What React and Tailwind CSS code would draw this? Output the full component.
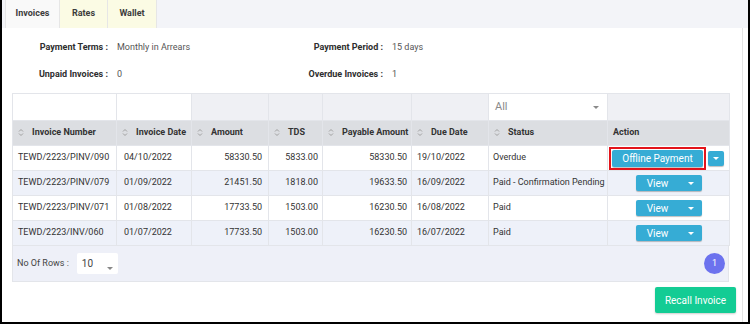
import { useState } from 'react'

const ROWS = [
  { no: 'TEWD/2223/PINV/090', date: '04/10/2022', amount: '58330.50', tds: '5833.00', payable: '58330.50', due: '19/10/2022', status: 'Overdue', action: 'offline' },
  { no: 'TEWD/2223/PINV/079', date: '01/09/2022', amount: '21451.50', tds: '1818.00', payable: '19633.50', due: '16/09/2022', status: 'Paid - Confirmation Pending', action: 'view' },
  { no: 'TEWD/2223/PINV/071', date: '01/08/2022', amount: '17733.50', tds: '1503.00', payable: '16230.50', due: '16/08/2022', status: 'Paid', action: 'view' },
  { no: 'TEWD/2223/INV/060', date: '01/07/2022', amount: '17733.50', tds: '1503.00', payable: '16230.50', due: '16/07/2022', status: 'Paid', action: 'view' },
]

const HEADERS = ['Invoice Number', 'Invoice Date', 'Amount', 'TDS', 'Payable Amount', 'Due Date', 'Status']

function SortIcon() {
  return (
    <svg width="6" height="9" viewBox="0 0 6 9" className="inline-block mr-[8px] -mt-[1px]" fill="none" stroke="#a0a0a0" strokeWidth="1">
      <path d="M1 3.5 L3 1.5 L5 3.5" />
      <path d="M1 5.5 L3 7.5 L5 5.5" />
    </svg>
  )
}

function Caret({ color = 'border-t-white' }) {
  return <span className={`inline-block w-0 h-0 border-x-[3px] border-t-[3px] border-x-transparent ${color}`} />
}

function ActionButton({ type }) {
  if (type === 'offline') {
    return (
      <div className="flex items-center gap-[2px] pl-[1px]">
        <div className="border-2 border-[#e3141b] p-px">
          <button className="w-[91px] h-[17px] bg-[#36acd5] text-white text-[10px] leading-[17px] rounded-[2px] shadow-[0_1px_1px_rgba(0,0,0,0.25)]">
            Offline Payment
          </button>
        </div>
        <button className="w-[16px] h-[15px] bg-[#36acd5] rounded-[2px] flex items-center justify-center shadow-[0_1px_1px_rgba(0,0,0,0.25)]">
          <Caret />
        </button>
      </div>
    )
  }
  return (
    <div className="flex justify-center">
      <button className="w-[66px] h-[16px] bg-[#36acd5] text-white text-[10px] rounded-[2px] flex items-center shadow-[0_1px_1px_rgba(0,0,0,0.25)]">
        <span className="w-[44px] text-center">View</span>
        <span className="w-[22px] flex justify-center"><Caret /></span>
      </button>
    </div>
  )
}

export default function App() {
  const [tab, setTab] = useState('Invoices')

  return (
    <div className="w-[750px] h-[324px] bg-white border-x-2 border-b-2 border-black font-[Roboto,sans-serif] text-[9px] text-[#333] overflow-hidden">
      <div className="h-[28px] bg-[#f3f4f8] flex pl-[3px]">
        {['Invoices', 'Rates', 'Wallet'].map(name => (
          <button
            key={name}
            onClick={() => setTab(name)}
            className={`h-[28px] font-bold text-[9px] text-[#3c3c3c] border-r border-[#e6e6e6] ${
              name === 'Invoices' ? 'w-[55px] bg-[#f9f9f9] border-l' : name === 'Rates' ? 'w-[48px] bg-[#fbfbe4]' : 'w-[49px] bg-[#fbfbe4]'
            }`}
          >
            {name}
          </button>
        ))}
      </div>

      <div className="mr-[5px] h-[294px] border-r border-[#e4e4e4] flex flex-col">
        <div className="mt-[12px] flex h-[14px] leading-[14px]">
          <div className="w-[106px] text-right font-bold text-[#2e2e2e]">Payment Terms :</div>
          <div className="w-[159px] pl-[9px] text-[#555]">Monthly in Arrears</div>
          <div className="w-[116px] text-right font-bold text-[#2e2e2e]">Payment Period :</div>
          <div className="pl-[9px] text-[#555]">15 days</div>
        </div>
        <div className="mt-[13px] flex h-[14px] leading-[14px]">
          <div className="w-[106px] text-right font-bold text-[#2e2e2e]">Unpaid Invoices :</div>
          <div className="w-[159px] pl-[9px] text-[#555]">0</div>
          <div className="w-[116px] text-right font-bold text-[#2e2e2e]">Overdue Invoices :</div>
          <div className="pl-[9px] text-[#555]">1</div>
        </div>

        <div className="ml-[10px] mt-[12px] w-[717px]">
          <table className="w-[717px] table-fixed border-collapse">
            <colgroup>
              <col className="w-[104px]" />
              <col className="w-[75px]" />
              <col className="w-[77px]" />
              <col className="w-[54px]" />
              <col className="w-[89px]" />
              <col className="w-[77px]" />
              <col className="w-[119px]" />
              <col className="w-[122px]" />
            </colgroup>
            <thead>
              <tr className="h-[27px]">
                <th className="border border-[#e3e5ea] bg-white" />
                <th className="border border-[#e3e5ea] bg-white" />
                <th className="border border-[#e3e5ea] bg-[#eff0f4]" />
                <th className="border border-[#e3e5ea] bg-[#eff0f4]" />
                <th className="border border-[#e3e5ea] bg-[#eff0f4]" />
                <th className="border border-[#e3e5ea] bg-[#eff0f4]" />
                <th className="border border-[#e3e5ea] bg-white p-0">
                  <div className="flex items-center justify-between h-[26px] pl-[6px] pr-[8px] font-normal text-[11px] text-[#8a8a8a]">
                    <span>All</span>
                    <Caret color="border-t-[#8a8a8a]" />
                  </div>
                </th>
                <th className="border border-[#e3e5ea] bg-[#eff0f4]" />
              </tr>
              <tr className="h-[25px] bg-[#dcdee2]">
                {HEADERS.map(h => (
                  <th key={h} className="border-x border-[#e3e5ea] text-left font-bold pl-[5px] whitespace-nowrap">
                    <SortIcon />
                    {h}
                  </th>
                ))}
                <th className="border-x border-[#e3e5ea] text-left font-bold pl-[5px]">Action</th>
              </tr>
            </thead>
            <tbody>
              {ROWS.map((r, i) => (
                <tr key={r.no} className={`h-[25px] ${i % 2 ? 'bg-[#eef1f9]' : 'bg-white'}`}>
                  <td className="border border-[#e3e5ea] pl-[5px] whitespace-nowrap">{r.no}</td>
                  <td className="border border-[#e3e5ea] pl-[7px]">{r.date}</td>
                  <td className="border border-[#e3e5ea] text-right pr-[6px]">{r.amount}</td>
                  <td className="border border-[#e3e5ea] text-right pr-[4px]">{r.tds}</td>
                  <td className="border border-[#e3e5ea] text-right pr-[4px]">{r.payable}</td>
                  <td className="border border-[#e3e5ea] pl-[5px]">{r.due}</td>
                  <td className="border border-[#e3e5ea] pl-[4px] whitespace-nowrap">{r.status}</td>
                  <td className="border border-[#e3e5ea] p-0">
                    <ActionButton type={r.action} />
                  </td>
                </tr>
              ))}
            </tbody>
          </table>

          <div className="h-[36px] bg-[#eef0f8] border-x border-b border-[#e3e5ea] flex items-center justify-between pl-[4px] pr-[3px]">
            <div className="flex items-center gap-[8px]">
              <span className="text-[#444]">No Of Rows :</span>
              <div className="w-[41px] h-[21px] bg-white rounded-[2px] flex items-center justify-between pl-[5px] pr-[5px] text-[10px] text-[#444]">
                <span>10</span>
                <span className="mt-[5px]"><Caret color="border-t-[#888]" /></span>
              </div>
            </div>
            <div className="w-[21px] h-[21px] rounded-full bg-[#6c72ee] text-white text-[9px] flex items-center justify-center">1</div>
          </div>
        </div>

        <div className="flex justify-end pr-[6px] mt-[5px]">
          <button className="w-[81px] h-[26px] bg-[#13cc94] text-white text-[10px] rounded-[2px] shadow-[0_1px_2px_rgba(0,0,0,0.2)]">
            Recall Invoice
          </button>
        </div>
      </div>
    </div>
  )
}
